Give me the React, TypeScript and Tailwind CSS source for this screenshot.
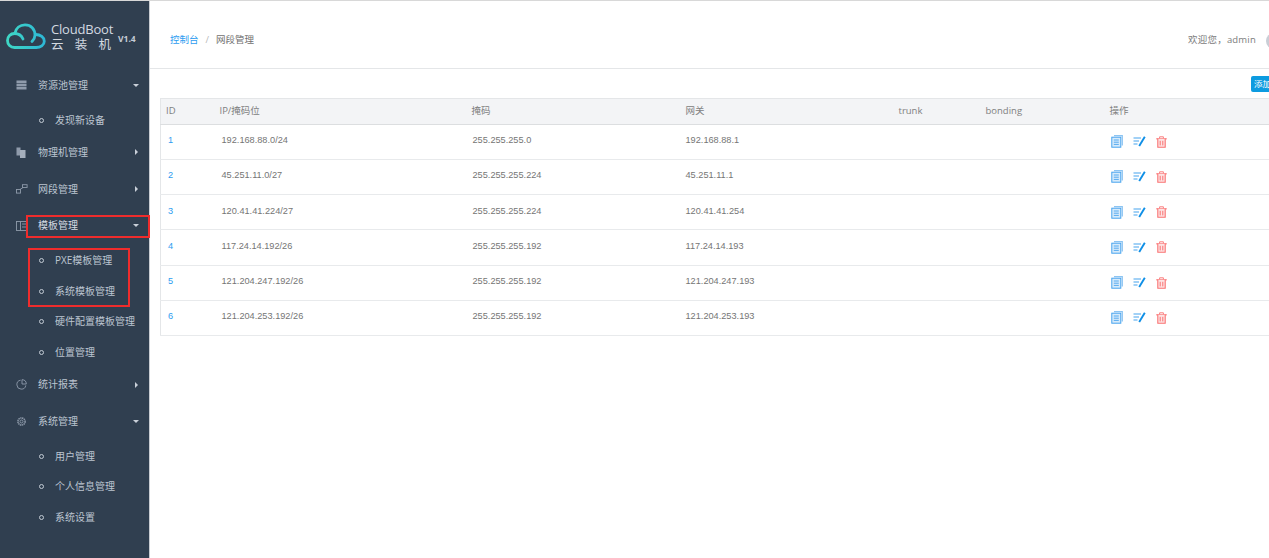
import React from 'react';

const font = "font-['Open_Sans','Noto_Sans_CJK_SC',sans-serif]";

const rows = [
  { id: 1, ip: '192.168.88.0/24', mask: '255.255.255.0', gw: '192.168.88.1' },
  { id: 2, ip: '45.251.11.0/27', mask: '255.255.255.224', gw: '45.251.11.1' },
  { id: 3, ip: '120.41.41.224/27', mask: '255.255.255.224', gw: '120.41.41.254' },
  { id: 4, ip: '117.24.14.192/26', mask: '255.255.255.192', gw: '117.24.14.193' },
  { id: 5, ip: '121.204.247.192/26', mask: '255.255.255.192', gw: '121.204.247.193' },
  { id: 6, ip: '121.204.253.192/26', mask: '255.255.255.192', gw: '121.204.253.193' },
];

function Logo() {
  return (
    <svg width="40" height="27" viewBox="0 0 40 27" fill="none" stroke="url(#cloud)" strokeWidth="2.8" strokeLinecap="round">
      <defs>
        <linearGradient id="cloud" gradientUnits="userSpaceOnUse" x1="0" y1="0" x2="40" y2="0">
          <stop offset="0" stopColor="#3fd8c4" />
          <stop offset="1" stopColor="#2db6d6" />
        </linearGradient>
      </defs>
      <path d="M30 24.5H8.5C4.5 24.5 1.5 21.5 1.5 17.5C1.5 13.5 4.5 10.5 8.5 10.5C12 10.5 15.5 12.5 17 16" />
      <path d="M9 10C10 5 14 1.8 19 1.8C25 1.8 29 6 29 12C29 14.5 28 16.5 26 18.5" />
      <path d="M29.5 11.5C34.5 11.5 38.3 14.5 38.3 18.2C38.3 22 34.5 24.5 30 24.5" />
    </svg>
  );
}

function NavIcon({ name }: { name: string }) {
  const c = '#8f9bab';
  if (name === 'pool')
    return (
      <svg width="11" height="10" viewBox="0 0 11 10" fill={c}>
        <rect x="0.5" y="0.5" width="10" height="2.6" />
        <rect x="0.5" y="3.7" width="10" height="2.6" />
        <rect x="0.5" y="6.9" width="10" height="2.6" />
      </svg>
    );
  if (name === 'server')
    return (
      <svg width="10" height="11" viewBox="0 0 10 11" fill={c}>
        <rect x="0.5" y="0.5" width="4" height="8" />
        <rect x="4" y="3" width="5.5" height="8" fill="#a5afbc" />
      </svg>
    );
  if (name === 'net')
    return (
      <svg width="12" height="10" viewBox="0 0 12 10" fill="none" stroke={c} strokeWidth="0.9">
        <rect x="0.5" y="5.5" width="4" height="3.6" />
        <rect x="6.5" y="0.7" width="4.6" height="2.8" />
        <path d="M4 5.5L7 3.5" />
      </svg>
    );
  if (name === 'tpl')
    return (
      <svg width="11" height="10" viewBox="0 0 11 10" fill="none" stroke={c} strokeWidth="0.9">
        <rect x="0.5" y="0.5" width="10" height="9" />
        <path d="M4.5 0.5V9.5M6 3H10.5M6 6H10.5" />
      </svg>
    );
  if (name === 'chart')
    return (
      <svg width="11" height="11" viewBox="0 0 11 11" fill="none" stroke={c} strokeWidth="0.9">
        <path d="M9.8 6.4A4.5 4.5 0 1 1 4.6 1.2" />
        <path d="M6 0.7V5H10.3A4.4 4.4 0 0 0 6 0.7Z" />
      </svg>
    );
  return (
    <svg width="11" height="11" viewBox="0 0 11 11" fill="none" stroke={c}>
      <circle cx="5.5" cy="5.5" r="3.6" strokeWidth="1.5" strokeDasharray="1.4 0.5" />
      <circle cx="5.5" cy="5.5" r="1.5" strokeWidth="0.9" />
    </svg>
  );
}

function NavItem({ icon, label, open, active }: { icon: string; label: string; open?: boolean; active?: boolean }) {
  return (
    <div className="flex h-[36.6px] items-center pl-[16px] pr-[10px]">
      <span className="flex w-[22px] shrink-0 items-center">
        <NavIcon name={icon} />
      </span>
      <span className={`flex-1 text-[10px] ${active ? 'text-[#d5dbe3]' : 'text-[#bcc5d0]'}`}>{label}</span>
      {open ? (
        <span className="h-0 w-0 border-x-[3px] border-t-[3px] border-x-transparent border-t-[#c9d0d9]" />
      ) : (
        <span className="mr-[1px] h-0 w-0 border-y-[3px] border-l-[3px] border-y-transparent border-l-[#c9d0d9]" />
      )}
    </div>
  );
}

function SubItem({ label }: { label: string }) {
  return (
    <div className="flex h-[30.6px] items-center pl-[39px]">
      <span className="mr-[11px] h-[5px] w-[5px] shrink-0 rounded-full border border-[#c3cbd5]" />
      <span className="text-[10px] text-[#bcc5d0]">{label}</span>
    </div>
  );
}

function SubList({ children }: { children: React.ReactNode }) {
  return <div className="-mb-[1.5px] pt-[1.5px]">{children}</div>;
}

function CopyIcon() {
  return (
    <svg width="12" height="13" viewBox="0 0 12 13" fill="none">
      <path d="M3 0.7H11.3V10.5" stroke="#8cc4f2" strokeWidth="1.2" />
      <rect x="0.8" y="2.2" width="9" height="10" fill="#d7ebfb" stroke="#46a3ee" strokeWidth="1" />
      <path d="M2.8 5H7.8M2.8 7.2H7.8M2.8 9.4H7.8" stroke="#46a3ee" strokeWidth="0.9" />
    </svg>
  );
}

function EditIcon() {
  return (
    <svg width="13" height="11" viewBox="0 0 13 11" fill="none">
      <path d="M0.5 2H8M0.5 5H6M0.5 8H4.5" stroke="#46a3ee" strokeWidth="1.1" />
      <path d="M6.2 10L11.8 0.8" stroke="#0f8fe6" strokeWidth="1.9" />
    </svg>
  );
}

function TrashIcon() {
  return (
    <svg width="11" height="12" viewBox="0 0 11 12" fill="none" stroke="#fa7373">
      <path d="M0.3 2.8H10.7" strokeWidth="1.2" />
      <path d="M3.6 2.6V0.8H7.4V2.6" strokeWidth="0.9" />
      <path d="M1.8 2.8V11.3H9.2V2.8" fill="#fde3e3" strokeWidth="1.1" />
      <path d="M4.2 4.8V9.4M6.8 4.8V9.4" strokeWidth="1" />
    </svg>
  );
}

export default function App() {
  return (
    <div className={`relative flex h-[558px] w-[1269px] overflow-hidden border-t border-[#d8d8d8] bg-white ${font}`}>
      <aside className="w-[150px] shrink-0 border-r border-[#c8ccd2] bg-[#303f50]">
        <div className="flex h-[66px] items-center pl-[6px] pt-[4px]">
          <Logo />
          <div className="ml-[5px] w-[63px] text-[#d3d9e0]">
            <div className="text-[13px] leading-[16px] tracking-[-0.2px]">CloudBoot</div>
            <div className="flex w-[60px] justify-between text-[12.5px] leading-[15px]">
              <span>云</span>
              <span>装</span>
              <span>机</span>
            </div>
          </div>
          <span className="ml-[4px] mt-[7px] text-[8.5px] font-bold text-[#c5ccd6]">V1.4</span>
        </div>
        <NavItem icon="pool" label="资源池管理" open />
        <SubList>
          <SubItem label="发现新设备" />
        </SubList>
        <NavItem icon="server" label="物理机管理" />
        <NavItem icon="net" label="网段管理" />
        <NavItem icon="tpl" label="模板管理" open active />
        <SubList>
          <SubItem label="PXE模板管理" />
          <SubItem label="系统模板管理" />
          <SubItem label="硬件配置模板管理" />
          <SubItem label="位置管理" />
        </SubList>
        <NavItem icon="chart" label="统计报表" />
        <NavItem icon="gear" label="系统管理" open />
        <SubList>
          <SubItem label="用户管理" />
          <SubItem label="个人信息管理" />
          <SubItem label="系统设置" />
        </SubList>
      </aside>

      <main className="min-w-0 flex-1 overflow-hidden">
        <header className="flex h-[68px] w-[1132px] items-center justify-between border-b border-[#e4e6e8] pl-[20px] pt-[12px] text-[9.5px]">
          <div className="flex items-center">
            <span className="text-[#2d9cf0]">控制台</span>
            <span className="mx-[7px] text-[#b8b8b8]">/</span>
            <span className="text-[#707070]">网段管理</span>
          </div>
          <div className="flex items-center">
            <span className="tracking-[0.2px] text-[#7c7c7c]">欢迎您，admin</span>
            <span className="ml-[10px] h-[16px] w-[16px] shrink-0 rounded-full bg-[#c9ced6]" />
          </div>
        </header>

        <div className="w-[1130px] pl-[10px]">
          <div className="flex h-[29px] items-start justify-end pt-[7px] pr-[2px]">
            <button className="h-[16px] w-[27px] overflow-hidden whitespace-nowrap rounded-[2px] bg-[#0d9be0] pl-[3px] text-left text-[8.5px] leading-[16px] text-white">
              添加
            </button>
          </div>

          <table className="w-full table-fixed border-collapse border border-[#e4e6e8] text-[9.5px]">
            <colgroup>
              <col className="w-[54px]" />
              <col className="w-[251px]" />
              <col className="w-[214px]" />
              <col className="w-[213px]" />
              <col className="w-[87px]" />
              <col className="w-[124px]" />
              <col />
            </colgroup>
            <thead>
              <tr className="h-[25.5px] border-b border-[#dcdee0] bg-[#f3f4f6] text-left text-[#808080]">
                <th className="pl-[5px] font-normal">ID</th>
                <th className="pl-[5px] font-normal">IP/掩码位</th>
                <th className="pl-[6px] font-normal">掩码</th>
                <th className="pl-[6px] font-normal">网关</th>
                <th className="pl-[6px] font-normal">trunk</th>
                <th className="pl-[6px] font-normal">bonding</th>
                <th className="pl-[6px] font-normal">操作</th>
              </tr>
            </thead>
            <tbody className="font-['Liberation_Sans',sans-serif] text-[9.2px] text-[#757575]">
              {rows.map(r => (
                <tr key={r.id} className="h-[35.25px] border-b border-[#e8eaec]">
                  <td className="pb-[1px] pl-[7px] text-[#2d9cf0]">{r.id}</td>
                  <td className="pb-[1px] pl-[7px]">{r.ip}</td>
                  <td className="pb-[1px] pl-[7px]">{r.mask}</td>
                  <td className="pb-[1px] pl-[6px]">{r.gw}</td>
                  <td />
                  <td />
                  <td className="pl-[7px]">
                    <div className="flex items-center gap-[10px]">
                      <CopyIcon />
                      <EditIcon />
                      <TrashIcon />
                    </div>
                  </td>
                </tr>
              ))}
            </tbody>
          </table>
        </div>
      </main>

      {/* red annotation boxes drawn over the menu */}
      <div className="absolute left-[26px] top-[214px] h-[23px] w-[124px] border-2 border-[#f02c2c]" />
      <div className="absolute left-[28px] top-[247px] h-[59px] w-[102px] border-2 border-[#f02c2c]" />
    </div>
  );
}
